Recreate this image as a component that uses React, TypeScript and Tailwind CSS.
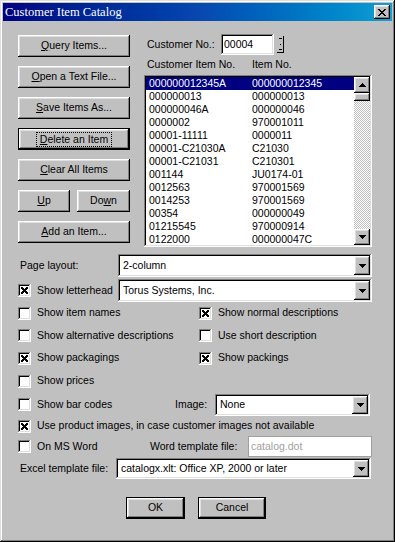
import React from 'react';

const raised =
  'shadow-[inset_-1px_-1px_#000000,inset_1px_1px_#ffffff,inset_-2px_-2px_#808080,inset_2px_2px_#dfdfdf]';
const sunken =
  'shadow-[inset_-1px_-1px_#ffffff,inset_1px_1px_#808080,inset_-2px_-2px_#dfdfdf,inset_2px_2px_#000000]';

const rows: [string, string][] = [
  ['000000012345A', '000000012345'],
  ['000000013', '000000013'],
  ['000000046A', '000000046'],
  ['0000002', '970001011'],
  ['00001-11111', '0000011'],
  ['00001-C21030A', 'C21030'],
  ['00001-C21031', 'C210301'],
  ['001144', 'JU0174-01'],
  ['0012563', '970001569'],
  ['0014253', '970001569'],
  ['00354', '000000049'],
  ['01215545', '970000914'],
  ['0122000', '000000047C'],
];

function Btn({
  children,
  className = '',
  isDefault = false,
}: {
  children: React.ReactNode;
  className?: string;
  isDefault?: boolean;
}) {
  if (isDefault) {
    return (
      <div className={`border border-black bg-[#c0c0c0] ${className}`}>
        <div className={`h-full flex items-center justify-center ${raised}`}>
          <span className="border border-dotted border-black px-[3px] leading-[13px]">{children}</span>
        </div>
      </div>
    );
  }
  return (
    <div className={`flex items-center justify-center bg-[#c0c0c0] ${raised} ${className}`}>
      <span>{children}</span>
    </div>
  );
}

function Arrow({ up = false }: { up?: boolean }) {
  return (
    <svg width="7" height="4" viewBox="0 0 7 4" shapeRendering="crispEdges">
      {up ? <path d="M3 0h1v1h1v1h1v1h1v1H0V3h1V2h1V1h1z" fill="#000" /> : <path d="M0 0h7v1H6v1H5v1H4v1H3V3H2V2H1V1H0z" fill="#000" />}
    </svg>
  );
}

function Check({ checked = false }: { checked?: boolean }) {
  return (
    <div className={`w-[13px] h-[13px] bg-white flex items-center justify-center shrink-0 ${sunken}`}>
      {checked && (
        <svg width="7" height="7" viewBox="0 0 7 7" shapeRendering="crispEdges">
          <path d="M0 0h2v1h1v1h1V1h1V0h2v2H6v1H5v1h1v1h1v2H5V6H4V5H3v1H2v1H0V5h1V4h1V3H1V2H0z" fill="#000" />
        </svg>
      )}
    </div>
  );
}

function CheckRow({ label, checked = false, className = '' }: { label: string; checked?: boolean; className?: string }) {
  return (
    <div className={`flex items-center gap-[6px] ${className}`}>
      <Check checked={checked} />
      <span className="whitespace-nowrap">{label}</span>
    </div>
  );
}

function Combo({ value, className = '' }: { value: string; className?: string }) {
  return (
    <div className={`bg-white flex p-[2px] ${sunken} ${className}`}>
      <div className="flex-1 flex items-center pl-[3px] whitespace-nowrap overflow-hidden">{value}</div>
      <div className={`w-[16px] bg-[#c0c0c0] flex items-center justify-center ${raised}`}>
        <Arrow />
      </div>
    </div>
  );
}

export default function App() {
  return (
    <div className="w-[395px] h-[542px] bg-[#c0c0c0] p-[3px] flex flex-col text-[10.5px] text-black font-['Liberation_Sans',Arial,sans-serif] shadow-[inset_-1px_-1px_#000000,inset_1px_1px_#dfdfdf,inset_-2px_-2px_#808080,inset_2px_2px_#ffffff]">
      {/* title bar */}
      <div className="h-[18px] flex items-center bg-linear-to-r from-[#000080] via-[#0846b0] to-[#10a0d4] pl-[2px] pr-[2px]">
        <span className="flex-1 text-white text-[12.5px] font-normal leading-none font-['Liberation_Serif',serif]">Customer Item Catalog</span>
        <div className={`w-[16px] h-[14px] bg-[#c0c0c0] flex items-center justify-center ${raised}`}>
          <svg width="8" height="7" viewBox="0 0 8 7" shapeRendering="crispEdges">
            <path d="M0 0h2v1h1v1h2V1h1V0h2v1H7v1H6v1H5v1h1v1h1v1h1v1H6V6H5V5H3v1H2v1H0V6h1V5h1V4h1V3H2V2H1V1H0z" fill="#000" />
          </svg>
        </div>
      </div>

      <div className="flex flex-col pl-[15px]">
        {/* top section */}
        <div className="flex mt-[13px]">
          <div className="w-[112px] flex flex-col gap-[9px] mt-px">
            <Btn className="h-[22px]"><u>Q</u>uery Items...</Btn>
            <Btn className="h-[22px]"><u>O</u>pen a Text File...</Btn>
            <Btn className="h-[22px]"><u>S</u>ave Items As...</Btn>
            <Btn className="h-[22px]" isDefault><u>D</u>elete an Item</Btn>
            <Btn className="h-[22px]"><u>C</u>lear All Items</Btn>
            <div className="flex gap-[7px]">
              <Btn className="h-[22px] w-[52px]"><u>U</u>p</Btn>
              <Btn className="h-[22px] w-[53px]">Do<u>w</u>n</Btn>
            </div>
            <Btn className="h-[22px]"><u>A</u>dd an Item...</Btn>
          </div>

          <div className="ml-[14px] w-[228px] flex flex-col">
            <div className="h-[21px] flex items-center">
              <span className="pl-[3px] w-[77px]">Customer No.:</span>
              <div className={`w-[53px] h-[21px] bg-white flex items-center pl-[3px] ${sunken}`}>00004</div>
              <div className="ml-[3px] w-[7px] h-[17px] flex flex-col items-center justify-between bg-[#c0c0c0] border-r border-b border-black py-[2px]">
                <div className="w-[3px] h-px bg-black" />
                <div className="w-px h-px bg-black" />
                <div className="w-[3px] h-px bg-black" />
              </div>
            </div>
            <div className="h-[20px] flex items-end pb-[2px]">
              <span className="pl-[3px] w-[108px]">Customer Item No.</span>
              <span>Item No.</span>
            </div>
            <div className={`h-[172px] bg-white p-[2px] flex ${sunken}`}>
              <div className="flex-1 flex flex-col">
                {rows.map((r, i) => (
                  <div
                    key={r[0]}
                    className={`h-[13px] flex items-center leading-[13px] ${i === 0 ? 'bg-[#000080] text-white' : ''}`}
                  >
                    <span className="w-[106px] pl-[3px]">{r[0]}</span>
                    <span>{r[1]}</span>
                  </div>
                ))}
              </div>
              <div className="w-[16px] flex flex-col">
                <div className={`h-[16px] bg-[#c0c0c0] flex items-center justify-center ${raised}`}>
                  <Arrow up />
                </div>
                <div className={`h-[8px] bg-[#c0c0c0] ${raised}`} />
                <div className="flex-1 bg-[repeating-conic-gradient(#c0c0c0_0%_25%,#ffffff_0%_50%)] bg-[length:2px_2px]" />
                <div className={`h-[16px] bg-[#c0c0c0] flex items-center justify-center ${raised}`}>
                  <Arrow />
                </div>
              </div>
            </div>
          </div>
        </div>

        {/* page layout */}
        <div className="flex items-center mt-[7px] h-[23px]">
          <span className="w-[100px] pl-[2px]">Page layout:</span>
          <Combo value="2-column" className="w-[254px] h-[23px]" />
        </div>
        <div className="flex items-center mt-[2px] h-[23px]">
          <CheckRow label="Show letterhead" checked className="w-[100px]" />
          <Combo value="Torus Systems, Inc." className="w-[254px] h-[23px]" />
        </div>

        <div className="flex items-center h-[22px]">
          <CheckRow label="Show item names" className="w-[181px]" />
          <CheckRow label="Show normal descriptions" checked />
        </div>
        <div className="flex items-center h-[23px]">
          <CheckRow label="Show alternative descriptions" className="w-[181px]" />
          <CheckRow label="Use short description" />
        </div>
        <div className="flex items-center h-[22px]">
          <CheckRow label="Show packagings" checked className="w-[181px]" />
          <CheckRow label="Show packings" checked />
        </div>
        <div className="flex items-center h-[24px]">
          <CheckRow label="Show prices" />
        </div>
        <div className="flex items-center h-[23px]">
          <CheckRow label="Show bar codes" className="w-[157px]" />
          <span className="w-[40px]">Image:</span>
          <Combo value="None" className="w-[155px] h-[22px]" />
        </div>
        <div className="flex items-center h-[20px]">
          <CheckRow label="Use product images, in case customer images not available" checked />
        </div>
        <div className="flex items-center h-[21px]">
          <CheckRow label="On MS Word" className="w-[132px]" />
          <span className="w-[98px]">Word template file:</span>
          <div className="w-[124px] h-[21px] bg-white border border-[#a0a0a0] flex items-center pl-[2px] text-[#a0a0a0]">
            catalog.dot
          </div>
        </div>
        <div className="flex items-center mt-px h-[21px]">
          <span className="w-[98px] pl-[2px]">Excel template file:</span>
          <Combo value="catalogx.xlt: Office XP, 2000 or later" className="w-[255px] h-[21px]" />
        </div>

        <div className="flex mt-[18px] ml-[108px] gap-[13px]">
          <Btn className="h-[22px] w-[59px] border border-black">OK</Btn>
          <Btn className="h-[22px] w-[68px] border border-black">Cancel</Btn>
        </div>
      </div>
    </div>
  );
}
